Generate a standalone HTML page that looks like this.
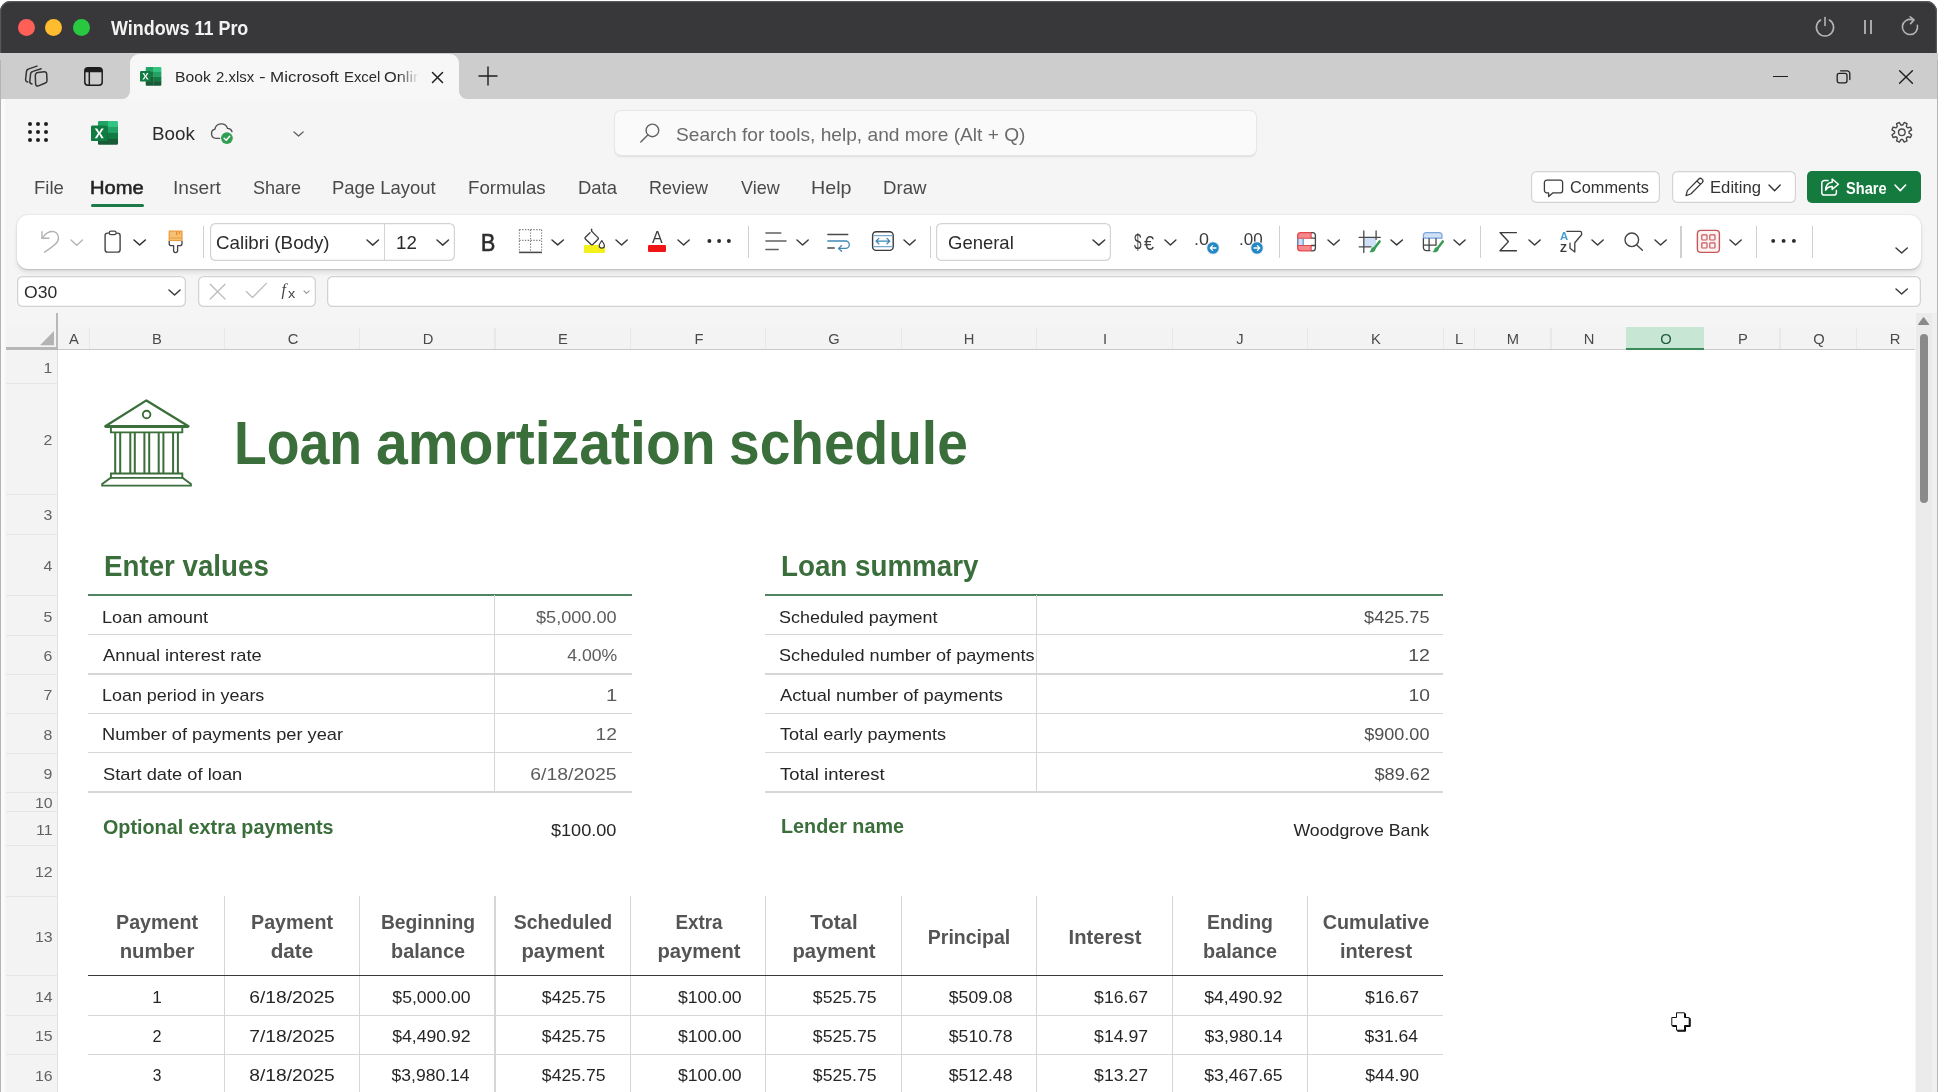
<!DOCTYPE html>
<html lang="en"><head><meta charset="utf-8"><title>Book 2.xlsx - Microsoft Excel Online</title>
<style>
html,body{margin:0;padding:0;}
body{width:1938px;height:1092px;overflow:hidden;position:relative;background:#fff;font-family:"Liberation Sans",sans-serif;}
#root{position:absolute;left:0;top:0;width:1938px;height:1092px;overflow:hidden;will-change:transform;}
#root>div,#root>svg,#root>span{position:absolute;}
.t{white-space:nowrap;display:block;}
svg{overflow:visible;}
</style></head><body><div id="root">
<div style="left:0px;top:1px;width:1937.4px;height:59px;background:#38383a;border-radius:11px 11px 0 0;box-shadow:inset 0 1.2px 0 #5a5a5d,inset 1.2px 0 0 #58585b,inset -1.2px 0 0 #58585b;"></div>
<div style="left:18.0px;top:18.7px;width:17px;height:17px;background:#fe5f57;border-radius:50%;"></div>
<div style="left:45.2px;top:18.7px;width:17px;height:17px;background:#febc2e;border-radius:50%;"></div>
<div style="left:72.5px;top:18.7px;width:17px;height:17px;background:#28c840;border-radius:50%;"></div>
<svg style="left:1812.6px;top:14.7px;" width="24" height="24" viewBox="0 0 24 24"><path d="M7.6 5 A8.6 8.6 0 1 0 16.4 5" fill="none" stroke="#b4b4b6" stroke-width="1.6" stroke-linecap="round"/><path d="M12 2.6 V10.4" stroke="#b4b4b6" stroke-width="1.6" stroke-linecap="round"/></svg>
<div style="left:1864.2px;top:19.5px;width:1.8px;height:14px;background:#a9a9ab;"></div>
<div style="left:1870.4px;top:19.5px;width:1.8px;height:14px;background:#a9a9ab;"></div>
<svg style="left:1898.4px;top:15.2px;" width="24" height="24" viewBox="0 0 24 24"><path d="M14.2 4.7 A7.6 7.6 0 1 0 19.4 10.4" fill="none" stroke="#b4b4b6" stroke-width="1.6" stroke-linecap="round"/><path d="M12.2 1.8 L16 4.9 L12.6 8.6" fill="none" stroke="#b4b4b6" stroke-width="1.6" stroke-linecap="round" stroke-linejoin="round"/></svg>
<div style="left:0px;top:53.4px;width:1938px;height:45.8px;background:#cdcdcd;"></div>
<div style="left:0px;top:99px;width:1938px;height:993px;background:#f5f5f5;"></div>
<div style="left:130px;top:54px;width:329px;height:45px;background:#f7f7f7;border-radius:9px 9px 0 0;"></div>
<svg style="left:122px;top:91px;" width="8" height="8" viewBox="0 0 8 8"><path d="M8 0 V8 H0 A8 8 0 0 0 8 0Z" fill="#f7f7f7"/></svg>
<svg style="left:459px;top:91px;" width="8" height="8" viewBox="0 0 8 8"><path d="M0 0 V8 H8 A8 8 0 0 1 0 0Z" fill="#f7f7f7"/></svg>
<svg style="left:24px;top:64px;" width="24" height="24" viewBox="0 0 24 24"><g fill="none" stroke="#333" stroke-width="1.5" stroke-linecap="round" stroke-linejoin="round"><path d="M13.9 8.6 L20.2 7.8 A2.2 2.2 0 0 1 22.7 10 L23 16.6 A2.4 2.4 0 0 1 21.4 19 L14.4 21.9 A2 2 0 0 1 11.6 20.1 L11.3 11.4 A2.7 2.7 0 0 1 13.9 8.6Z" fill="#cdcdcd"/><path d="M17.1 4.8 L8.9 7.4 A3.2 3.2 0 0 0 6.5 10.6 L5.8 17 A2.6 2.6 0 0 0 8 19.9"/><path d="M13 2.1 L4.8 4.9 A3.2 3.2 0 0 0 2.4 8 L1.7 14.6 A2.6 2.6 0 0 0 3.7 18"/></g></svg>
<svg style="left:84px;top:66.5px;" width="19" height="19" viewBox="0 0 19 19"><rect x="0.8" y="0.8" width="17.4" height="17.4" rx="3.2" fill="none" stroke="#1d1d1d" stroke-width="1.5"/><path d="M0.8 5.2 V4 A3.2 3.2 0 0 1 4 0.8 H15 A3.2 3.2 0 0 1 18.2 4 V5.2Z" fill="#1d1d1d"/><path d="M5.3 5 V18" stroke="#1d1d1d" stroke-width="1.5"/></svg>
<svg style="left:140px;top:67px;" width="21.6" height="18.8" viewBox="0 0 21.6 18.8"><clipPath id="c140"><rect x="5.5" y="0" width="16.1" height="18.8" rx="1.4"/></clipPath><g clip-path="url(#c140)"><rect x="5.5" y="0.00" width="8.25" height="4.90" fill="#21a366"/><rect x="13.55" y="0.00" width="8.05" height="4.90" fill="#33c481"/><rect x="5.5" y="4.70" width="8.25" height="4.90" fill="#107c41"/><rect x="13.55" y="4.70" width="8.05" height="4.90" fill="#21a366"/><rect x="5.5" y="9.40" width="8.25" height="4.90" fill="#185c37"/><rect x="13.55" y="9.40" width="8.05" height="4.90" fill="#107c41"/><rect x="5.5" y="14.10" width="8.25" height="4.90" fill="#185c37"/><rect x="13.55" y="14.10" width="8.05" height="4.90" fill="#185c37"/></g><rect x="0" y="4.1" width="11" height="10.5" rx="1.2" fill="#107c41"/><path d="M2.47 6.09 H4.12 L5.50 8.63 L6.88 6.09 H8.53 L6.33 9.35 L8.53 12.61 H6.88 L5.50 10.07 L4.12 12.61 H2.47 L4.67 9.35Z" fill="#fff"/></svg>
<svg style="left:430px;top:70px;" width="15" height="15" viewBox="0 0 15 15"><path d="M2.5 2.5 L12.5 12.5 M12.5 2.5 L2.5 12.5" stroke="#1f1f1f" stroke-width="1.5" stroke-linecap="round"/></svg>
<svg style="left:478px;top:65.6px;" width="20" height="20" viewBox="0 0 20 20"><path d="M1 10 H19 M10 1 V19" stroke="#1f1f1f" stroke-width="1.4" stroke-linecap="round"/></svg>
<div style="left:1772.5px;top:75.8px;width:15.5px;height:1.3px;background:#1f1f1f;"></div>
<svg style="left:1835.6px;top:69px;" width="16" height="16" viewBox="0 0 16 16"><rect x="1.2" y="4.4" width="9.8" height="9.4" rx="2" fill="none" stroke="#1f1f1f" stroke-width="1.3"/><path d="M4.6 1.8 H11 A2.8 2.8 0 0 1 13.8 4.6 V10.6" fill="none" stroke="#1f1f1f" stroke-width="1.3" stroke-linecap="round"/></svg>
<svg style="left:1898.1px;top:68.6px;" width="16" height="16" viewBox="0 0 16 16"><path d="M1.6 1.8 L14.4 14.2 M14.4 1.8 L1.6 14.2" stroke="#1f1f1f" stroke-width="1.4" stroke-linecap="round"/></svg>
<div style="left:28.0px;top:121.8px;width:4px;height:4px;background:#1f1f1f;border-radius:50%;"></div>
<div style="left:28.0px;top:129.8px;width:4px;height:4px;background:#1f1f1f;border-radius:50%;"></div>
<div style="left:28.0px;top:137.8px;width:4px;height:4px;background:#1f1f1f;border-radius:50%;"></div>
<div style="left:36.2px;top:121.8px;width:4px;height:4px;background:#1f1f1f;border-radius:50%;"></div>
<div style="left:36.2px;top:129.8px;width:4px;height:4px;background:#1f1f1f;border-radius:50%;"></div>
<div style="left:36.2px;top:137.8px;width:4px;height:4px;background:#1f1f1f;border-radius:50%;"></div>
<div style="left:44.4px;top:121.8px;width:4px;height:4px;background:#1f1f1f;border-radius:50%;"></div>
<div style="left:44.4px;top:129.8px;width:4px;height:4px;background:#1f1f1f;border-radius:50%;"></div>
<div style="left:44.4px;top:137.8px;width:4px;height:4px;background:#1f1f1f;border-radius:50%;"></div>
<svg style="left:91px;top:120.6px;" width="27.0" height="23.8" viewBox="0 0 27.0 23.8"><clipPath id="c91"><rect x="6.9" y="0" width="20.1" height="23.8" rx="1.4"/></clipPath><g clip-path="url(#c91)"><rect x="6.9" y="0.00" width="10.25" height="6.15" fill="#21a366"/><rect x="16.95" y="0.00" width="10.05" height="6.15" fill="#33c481"/><rect x="6.9" y="5.95" width="10.25" height="6.15" fill="#107c41"/><rect x="16.95" y="5.95" width="10.05" height="6.15" fill="#21a366"/><rect x="6.9" y="11.90" width="10.25" height="6.15" fill="#185c37"/><rect x="16.95" y="11.90" width="10.05" height="6.15" fill="#107c41"/><rect x="6.9" y="17.85" width="10.25" height="6.15" fill="#185c37"/><rect x="16.95" y="17.85" width="10.05" height="6.15" fill="#185c37"/></g><rect x="0" y="4.5" width="16.5" height="15.6" rx="1.2" fill="#107c41"/><path d="M3.71 7.46 H6.19 L8.25 11.24 L10.31 7.46 H12.79 L9.49 12.30 L12.79 17.14 H10.31 L8.25 13.36 L6.19 17.14 H3.71 L7.01 12.30Z" fill="#fff"/></svg>
<svg style="left:208px;top:120px;" width="28" height="28" viewBox="208 120 28 28"><path d="M219.6 138.4 H216 A4.7 4.7 0 0 1 214.9 129.2 A6.5 6.5 0 0 1 227.5 128.4 A4.6 4.6 0 0 1 232 131.6" fill="none" stroke="#505050" stroke-width="1.4" stroke-linecap="round"/><circle cx="226.9" cy="138.1" r="5.9" fill="#2f9e50"/><path d="M224.2 138.3 L226.2 140.2 L229.7 136.3" fill="none" stroke="#fff" stroke-width="1.5" stroke-linecap="round" stroke-linejoin="round"/></svg>
<svg style="left:291.65px;top:130.01px;" width="13.1" height="7.97" viewBox="0 0 13.1 7.97"><path d="M2 2 L6.55 5.97 L11.10 2" fill="none" stroke="#616161" stroke-width="1.3" stroke-linecap="round" stroke-linejoin="round"/></svg>
<div style="left:614.5px;top:110.5px;width:641px;height:44px;background:#fafafa;border-radius:6px;box-shadow:0 0 0 1px #e6e6e6,0 1.5px 2px rgba(0,0,0,.10);"></div>
<svg style="left:639px;top:122px;" width="22" height="22" viewBox="0 0 22 22"><circle cx="13.4" cy="8.4" r="6.3" fill="none" stroke="#616161" stroke-width="1.4"/><path d="M8.8 13 L1.8 20" stroke="#616161" stroke-width="1.4" stroke-linecap="round"/></svg>
<svg style="left:1888px;top:118px;" width="28" height="28" viewBox="1888 118 28 28"><g fill="none" stroke="#484848" stroke-width="1.4" stroke-linejoin="round"><circle cx="1901.8" cy="132.3" r="3.3"/><path d="M1909.05 133.19 L1911.60 134.73 L1910.45 137.52 L1907.55 136.79 L1906.29 138.05 L1907.02 140.95 L1904.23 142.10 L1902.69 139.55 L1900.91 139.55 L1899.37 142.10 L1896.58 140.95 L1897.31 138.05 L1896.05 136.79 L1893.15 137.52 L1892.00 134.73 L1894.55 133.19 L1894.55 131.41 L1892.00 129.87 L1893.15 127.08 L1896.05 127.81 L1897.31 126.55 L1896.58 123.65 L1899.37 122.50 L1900.91 125.05 L1902.69 125.05 L1904.23 122.50 L1907.02 123.65 L1906.29 126.55 L1907.55 127.81 L1910.45 127.08 L1911.60 129.87 L1909.05 131.41Z"/></g></svg>
<div style="left:91px;top:203.6px;width:52.5px;height:3px;background:#1b7a47;border-radius:1.5px;"></div>
<div style="left:1530.6px;top:171.2px;width:129.4px;height:31.8px;background:#fff;border-radius:5.5px;box-shadow:inset 0 0 0 1.2px #d4d4d4;"></div>
<svg style="left:1542.8px;top:177.5px;" width="22" height="22" viewBox="0 0 22 22"><path d="M3.6 2.2 H17.4 A2.2 2.2 0 0 1 19.6 4.4 V12.6 A2.2 2.2 0 0 1 17.4 14.8 H10 L5.6 18.6 V14.8 H3.6 A2.2 2.2 0 0 1 1.4 12.6 V4.4 A2.2 2.2 0 0 1 3.6 2.2Z" fill="none" stroke="#3b3b3b" stroke-width="1.3" stroke-linejoin="round"/></svg>
<div style="left:1671.8px;top:171.2px;width:124px;height:31.8px;background:#fff;border-radius:5.5px;box-shadow:inset 0 0 0 1.2px #d4d4d4;"></div>
<svg style="left:1684px;top:177px;" width="21" height="21" viewBox="0 0 21 21"><path d="M14.6 2.2 A2.3 2.3 0 0 1 18.2 5.6 L6.8 17 L2 18.6 L3.4 13.6Z M13 4 L16.4 7.4" fill="none" stroke="#3b3b3b" stroke-width="1.3" stroke-linejoin="round" stroke-linecap="round"/></svg>
<svg style="left:1767.4px;top:182.82px;" width="15.2" height="9.76" viewBox="0 0 15.2 9.76"><path d="M2 2 L7.60 7.76 L13.20 2" fill="none" stroke="#333" stroke-width="1.4" stroke-linecap="round" stroke-linejoin="round"/></svg>
<div style="left:1807px;top:170.8px;width:114px;height:32.5px;background:#147a3d;border-radius:5px;"></div>
<svg style="left:1819.5px;top:177px;" width="20" height="20" viewBox="0 0 20 20"><path d="M8 3.4 H4.4 A2.6 2.6 0 0 0 1.8 6 V15.4 A2.6 2.6 0 0 0 4.4 18 H13.8 A2.6 2.6 0 0 0 16.4 15.4 V13.6" fill="none" stroke="#fff" stroke-width="1.5" stroke-linecap="round"/><path d="M12.2 2 L18.4 7.2 L12.2 12.4 V9.4 C9 9.4 7 10.6 5.6 13.2 C5.8 8.6 8.2 5.4 12.2 5.2Z" fill="none" stroke="#fff" stroke-width="1.5" stroke-linejoin="round"/></svg>
<svg style="left:1893.0px;top:182.88px;" width="14.6" height="9.64" viewBox="0 0 14.6 9.64"><path d="M2 2 L7.30 7.64 L12.60 2" fill="none" stroke="#fff" stroke-width="1.6" stroke-linecap="round" stroke-linejoin="round"/></svg>
<div style="left:16.8px;top:215.3px;width:1904.4px;height:53.6px;background:#fff;border-radius:11px;box-shadow:0 0.8px 1.8px rgba(0,0,0,.17),0 4px 5px rgba(0,0,0,.085);"></div>
<div style="left:202.9px;top:225.6px;width:1.2px;height:32.4px;background:#d0d0d0;"></div>
<div style="left:747.6999999999999px;top:225.6px;width:1.2px;height:32.4px;background:#d0d0d0;"></div>
<div style="left:929.6px;top:225.6px;width:1.2px;height:32.4px;background:#d0d0d0;"></div>
<div style="left:1278.6000000000001px;top:225.6px;width:1.2px;height:32.4px;background:#d0d0d0;"></div>
<div style="left:1479.8000000000002px;top:225.6px;width:1.2px;height:32.4px;background:#d0d0d0;"></div>
<div style="left:1680.4px;top:225.6px;width:1.2px;height:32.4px;background:#d0d0d0;"></div>
<div style="left:1755.9px;top:225.6px;width:1.2px;height:32.4px;background:#d0d0d0;"></div>
<div style="left:1812.0px;top:225.6px;width:1.2px;height:32.4px;background:#d0d0d0;"></div>
<svg style="left:38px;top:228px;" width="24" height="26" viewBox="0 0 24 26"><path d="M4 3.8 V10.2 H11" fill="none" stroke="#b2b2b2" stroke-width="1.4" stroke-linecap="round" stroke-linejoin="round"/><path d="M4.4 10 C7 5.4 12 2.6 16 3.7 C20.2 5 21.6 9.6 19.6 13.4 C18 16.6 12 20.6 6.6 24.2" fill="none" stroke="#b2b2b2" stroke-width="1.4" stroke-linecap="round" stroke-linejoin="round"/></svg>
<svg style="left:68.75px;top:237.81px;" width="15.5" height="9.17" viewBox="0 0 15.5 9.17"><path d="M2 2 L7.75 7.17 L13.50 2" fill="none" stroke="#b2b2b2" stroke-width="1.3" stroke-linecap="round" stroke-linejoin="round"/></svg>
<svg style="left:103px;top:229px;" width="20" height="26" viewBox="0 0 20 26"><rect x="2.1" y="4.1" width="15" height="19" rx="2.4" fill="none" stroke="#444" stroke-width="1.4"/><rect x="6.2" y="2.2" width="6.9" height="3.4" rx="1.7" fill="#fff" stroke="#444" stroke-width="1.2"/></svg>
<svg style="left:131.75px;top:237.93px;" width="15.3" height="8.95" viewBox="0 0 15.3 8.95"><path d="M2 2 L7.65 6.95 L13.30 2" fill="none" stroke="#2b2b2b" stroke-width="1.5" stroke-linecap="round" stroke-linejoin="round"/></svg>
<svg style="left:166px;top:229px;" width="20" height="26" viewBox="0 0 20 26"><path d="M3.2 2.2 H16 V11.6 H3.2Z" fill="#f6c172" stroke="#ea9a3e" stroke-width="1.2" stroke-linejoin="round"/><path d="M3.2 9 H16" stroke="#ea9a3e" stroke-width="1"/><path d="M10.6 2.4 V6.2 M13.4 2.4 V5.2" stroke="#e58a2a" stroke-width="1.2"/><path d="M3.2 12 V14.4 A2.2 2.2 0 0 0 5.4 16.6 H7.6 V21.6 A2 2 0 0 0 11.6 21.6 V16.6 H13.8 A2.2 2.2 0 0 0 16 14.4 V12" fill="#fff" stroke="#444" stroke-width="1.3" stroke-linejoin="round"/></svg>
<div style="left:209.5px;top:222.9px;width:245.3px;height:37.8px;background:#fff;border-radius:5.5px;box-shadow:inset 0 0 0 1.2px #d3d3d3;"></div>
<div style="left:383.9px;top:224px;width:1.2px;height:35.6px;background:#d3d3d3;"></div>
<svg style="left:365.35px;top:238.03px;" width="15.5" height="9.15" viewBox="0 0 15.5 9.15"><path d="M2 2 L7.75 7.15 L13.50 2" fill="none" stroke="#3a3a3a" stroke-width="1.5" stroke-linecap="round" stroke-linejoin="round"/></svg>
<svg style="left:434.85px;top:238.03px;" width="15.5" height="9.15" viewBox="0 0 15.5 9.15"><path d="M2 2 L7.75 7.15 L13.50 2" fill="none" stroke="#3a3a3a" stroke-width="1.5" stroke-linecap="round" stroke-linejoin="round"/></svg>
<svg style="left:518px;top:228px;" width="26" height="26" viewBox="0 0 26 26"><path d="M1.4 1.6 H23.6 M1.4 12.4 H23.6 M1.4 1.6 V23.6 M12.5 1.6 V23.6 M23.6 1.6 V23.6" fill="none" stroke="#7a7a7a" stroke-width="1.1" stroke-dasharray="1.3 1.5"/><path d="M1 24.4 H24" stroke="#4a4a4a" stroke-width="1.6"/></svg>
<svg style="left:550.3px;top:237.72px;" width="15.4" height="8.95" viewBox="0 0 15.4 8.95"><path d="M2 2 L7.70 6.95 L13.40 2" fill="none" stroke="#3a3a3a" stroke-width="1.5" stroke-linecap="round" stroke-linejoin="round"/></svg>
<div style="left:583.5px;top:245.3px;width:21.2px;height:7.3px;background:#f3f01c;border-radius:1px;"></div>
<svg style="left:583px;top:228px;" width="24" height="22" viewBox="0 0 24 22"><path d="M8.6 1.2 V6.2" stroke="#3b3b3b" stroke-width="1.3" stroke-linecap="round"/><path d="M8.8 3.4 L15 9.6 A1.2 1.2 0 0 1 15 11.3 L10 16.3 A1.6 1.6 0 0 1 7.8 16.3 L2.4 11 A1.2 1.2 0 0 1 2.4 9.3 L7 4.8" fill="#fff" stroke="#3b3b3b" stroke-width="1.3" stroke-linejoin="round" stroke-linecap="round"/><path d="M18.8 12.6 C20.2 14.6 21.4 16.2 21.4 17.6 A2.6 2.6 0 0 1 16.2 17.6 C16.2 16.2 17.4 14.6 18.8 12.6Z" fill="#fff" stroke="#3b3b3b" stroke-width="1.2" stroke-linejoin="round"/></svg>
<svg style="left:613.6px;top:237.72px;" width="15.2" height="8.95" viewBox="0 0 15.2 8.95"><path d="M2 2 L7.60 6.95 L13.20 2" fill="none" stroke="#3a3a3a" stroke-width="1.5" stroke-linecap="round" stroke-linejoin="round"/></svg>
<div style="left:647.9px;top:245.1px;width:18.4px;height:7.3px;background:#f01414;border-radius:1.2px;"></div>
<svg style="left:676.2px;top:237.72px;" width="15.2" height="8.95" viewBox="0 0 15.2 8.95"><path d="M2 2 L7.60 6.95 L13.20 2" fill="none" stroke="#3a3a3a" stroke-width="1.5" stroke-linecap="round" stroke-linejoin="round"/></svg>
<svg style="left:700px;top:236px;" width="40" height="10" viewBox="0 0 40 10"><circle cx="9.4" cy="5" r="1.95" fill="#2b2b2b"/><circle cx="19.1" cy="5" r="1.95" fill="#2b2b2b"/><circle cx="28.9" cy="5" r="1.95" fill="#2b2b2b"/></svg>
<svg style="left:760px;top:228px;" width="32" height="26" viewBox="0 0 32 26"><path d="M5.9 5 H20.8 M5.9 12.9 H26 M5.9 21.4 H18.2" stroke="#616161" stroke-width="1.5" stroke-linecap="round"/></svg>
<svg style="left:795.2px;top:237.72px;" width="15.2" height="8.95" viewBox="0 0 15.2 8.95"><path d="M2 2 L7.60 6.95 L13.20 2" fill="none" stroke="#3a3a3a" stroke-width="1.5" stroke-linecap="round" stroke-linejoin="round"/></svg>
<svg style="left:826px;top:230px;" width="26" height="24" viewBox="0 0 26 24"><path d="M1.8 4.5 H21.8" stroke="#4a4a4a" stroke-width="1.3" stroke-linecap="round"/><path d="M1.8 18 H8.2" stroke="#4a4a4a" stroke-width="1.5" stroke-linecap="round"/><path d="M1.8 11 H19.6 A3.6 3.6 0 0 1 19.6 18.4 H13.2" fill="none" stroke="#4089b5" stroke-width="1.3" stroke-linecap="round"/><path d="M15.6 15.6 L12.6 18.4 L15.6 21.2" fill="none" stroke="#4089b5" stroke-width="1.3" stroke-linecap="round" stroke-linejoin="round"/></svg>
<svg style="left:871px;top:230px;" width="24" height="22" viewBox="0 0 24 22"><rect x="1.6" y="1.8" width="20.6" height="18.6" rx="3.6" fill="#fff" stroke="#3b3b3b" stroke-width="1.4"/><path d="M1.8 5.6 H22 M1.8 16.6 H22" stroke="#7aa9cf" stroke-width="1.2"/><path d="M5.2 11.1 H18.6 M7.8 8.4 L5 11.1 L7.8 13.8 M16 8.4 L18.8 11.1 L16 13.8" fill="none" stroke="#3d86b4" stroke-width="1.3" stroke-linecap="round" stroke-linejoin="round"/></svg>
<svg style="left:902.1px;top:237.72px;" width="15.2" height="8.95" viewBox="0 0 15.2 8.95"><path d="M2 2 L7.60 6.95 L13.20 2" fill="none" stroke="#3a3a3a" stroke-width="1.5" stroke-linecap="round" stroke-linejoin="round"/></svg>
<div style="left:935.7px;top:222.9px;width:175.4px;height:37.8px;background:#fff;border-radius:5.5px;box-shadow:inset 0 0 0 1.2px #d3d3d3;"></div>
<svg style="left:1091.45px;top:238.03px;" width="15.7" height="9.15" viewBox="0 0 15.7 9.15"><path d="M2 2 L7.85 7.15 L13.70 2" fill="none" stroke="#3a3a3a" stroke-width="1.5" stroke-linecap="round" stroke-linejoin="round"/></svg>
<svg style="left:1163.35px;top:237.72px;" width="14.9" height="8.95" viewBox="0 0 14.9 8.95"><path d="M2 2 L7.45 6.95 L12.90 2" fill="none" stroke="#3a3a3a" stroke-width="1.5" stroke-linecap="round" stroke-linejoin="round"/></svg>
<svg style="left:1294px;top:229px;" width="26" height="26" viewBox="1294 229 26 26"><path d="M1311.1 232.7 H1300.6 A2.9 2.9 0 0 0 1297.7 235.6 V238.2 H1311.1Z" fill="#f5898c"/><path d="M1311.1 250.8 H1300.6 A2.9 2.9 0 0 1 1297.7 247.9 V245.5 H1311.1Z" fill="#f5898c"/><rect x="1297.7" y="238.2" width="5.4" height="7.3" fill="#cfe0f5"/><path d="M1311.1 232.7 H1300.6 A2.9 2.9 0 0 0 1297.7 235.6 V247.9 A2.9 2.9 0 0 0 1300.6 250.8 H1311.1" fill="none" stroke="#e2474c" stroke-width="1.3"/><path d="M1297.7 238.2 H1311.1 M1297.7 245.5 H1311.1 M1311.1 232.7 V238.2 M1311.1 245.5 V250.8" stroke="#e2474c" stroke-width="1.1"/><path d="M1297.7 238.4 V245.3 M1303.2 238.4 V245.3" stroke="#4f8fce" stroke-width="1.1"/><path d="M1311.1 232.7 H1312.5 A2.9 2.9 0 0 1 1315.4 235.6 V247.9 A2.9 2.9 0 0 1 1312.5 250.8 H1311.1 M1311.1 238.2 H1315.4 M1311.1 245.5 H1315.4" fill="none" stroke="#444" stroke-width="1.3"/></svg>
<svg style="left:1325.95px;top:237.72px;" width="15.3" height="8.95" viewBox="0 0 15.3 8.95"><path d="M2 2 L7.65 6.95 L13.30 2" fill="none" stroke="#3a3a3a" stroke-width="1.5" stroke-linecap="round" stroke-linejoin="round"/></svg>
<svg style="left:1356px;top:228px;" width="28" height="28" viewBox="1356 228 28 28"><rect x="1363.8" y="237.4" width="12.3" height="9.4" fill="#cfe0f7"/><path d="M1363.8 231 V252.6 M1376.1 231 V239.4 M1359.2 237.4 H1380.2 M1359.2 246.8 H1371" stroke="#4a4a4a" stroke-width="1.3" stroke-linecap="round"/><path d="M1379.6 241.4 L1374.6 248" stroke="#3a9c57" stroke-width="2.5" stroke-linecap="round"/><path d="M1374.9 247 C1373.2 246.6 1371.6 247.4 1371.2 249 C1370.9 250.6 1370.2 251.4 1369.2 251.9 C1371.4 252.8 1374.2 252.2 1375.2 250.2 C1375.8 249 1375.8 247.8 1374.9 247Z" fill="#3a9c57"/></svg>
<svg style="left:1389.1px;top:237.72px;" width="15.4" height="8.95" viewBox="0 0 15.4 8.95"><path d="M2 2 L7.70 6.95 L13.40 2" fill="none" stroke="#3a3a3a" stroke-width="1.5" stroke-linecap="round" stroke-linejoin="round"/></svg>
<svg style="left:1420px;top:228px;" width="28" height="28" viewBox="1420 228 28 28"><path d="M1423.4 238.2 V235.6 A3 3 0 0 1 1426.4 232.6 H1439 A3 3 0 0 1 1442 235.6 V238.2Z" fill="#cfe0f7" stroke="#7ba3d8" stroke-width="1.2"/><path d="M1423.4 238.6 V247.6 A3 3 0 0 0 1426.4 250.6 H1430 M1429.1 238.6 V250.6 M1423.4 245.2 H1436.1 M1436 238.6 V245.2" fill="none" stroke="#444" stroke-width="1.3" stroke-linecap="round"/><path d="M1442.8 241.4 L1437.8 248" stroke="#3a9c57" stroke-width="2.5" stroke-linecap="round"/><path d="M1438.1 247 C1436.4 246.6 1434.8 247.4 1434.4 249 C1434.1 250.6 1433.4 251.4 1432.4 251.9 C1434.6 252.8 1437.4 252.2 1438.4 250.2 C1439 249 1439 247.8 1438.1 247Z" fill="#3a9c57"/></svg>
<svg style="left:1452.05px;top:237.72px;" width="15.1" height="8.95" viewBox="0 0 15.1 8.95"><path d="M2 2 L7.55 6.95 L13.10 2" fill="none" stroke="#3a3a3a" stroke-width="1.5" stroke-linecap="round" stroke-linejoin="round"/></svg>
<svg style="left:1498px;top:231px;" width="21" height="22" viewBox="0 0 21 22"><path d="M18.4 1.6 H2 L10.4 10.6 L2 19.8 H18.4" fill="none" stroke="#3b3b3b" stroke-width="1.4" stroke-linejoin="round" stroke-linecap="round"/></svg>
<svg style="left:1527.4px;top:237.72px;" width="15.2" height="8.95" viewBox="0 0 15.2 8.95"><path d="M2 2 L7.60 6.95 L13.20 2" fill="none" stroke="#3a3a3a" stroke-width="1.5" stroke-linecap="round" stroke-linejoin="round"/></svg>
<svg style="left:1556px;top:228px;" width="30" height="28" viewBox="1556 228 30 28"><path d="M1566.8 231.3 H1580 A1.6 1.6 0 0 1 1581.6 232.9 V234.7 L1574.8 242.8 V252 L1570 248.3 V243.2" fill="none" stroke="#444" stroke-width="1.35" stroke-linejoin="round" stroke-linecap="round"/></svg>
<svg style="left:1590.1px;top:237.72px;" width="15.2" height="8.95" viewBox="0 0 15.2 8.95"><path d="M2 2 L7.60 6.95 L13.20 2" fill="none" stroke="#3a3a3a" stroke-width="1.5" stroke-linecap="round" stroke-linejoin="round"/></svg>
<svg style="left:1620px;top:228px;" width="28" height="28" viewBox="1620 228 28 28"><circle cx="1631.8" cy="239.8" r="6.8" fill="none" stroke="#444" stroke-width="1.4"/><path d="M1636.8 244.9 L1642.4 250.3" stroke="#444" stroke-width="1.4" stroke-linecap="round"/></svg>
<svg style="left:1653.2px;top:237.72px;" width="15.2" height="8.95" viewBox="0 0 15.2 8.95"><path d="M2 2 L7.60 6.95 L13.20 2" fill="none" stroke="#3a3a3a" stroke-width="1.5" stroke-linecap="round" stroke-linejoin="round"/></svg>
<svg style="left:1696px;top:229px;" width="26" height="26" viewBox="0 0 26 26"><rect x="1.4" y="1.4" width="22" height="22" rx="3.4" fill="#fdf3f3" stroke="#c8575a" stroke-width="1.4"/><g fill="none" stroke="#c8575a" stroke-width="1.2"><rect x="5.8" y="5.8" width="5.2" height="5.2" rx=".8"/><rect x="13.8" y="5.8" width="5.2" height="5.2" rx=".8"/><rect x="5.8" y="13.8" width="5.2" height="5.2" rx=".8"/><rect x="13.8" y="13.8" width="5.2" height="5.2" rx=".8"/></g></svg>
<svg style="left:1728.3px;top:237.72px;" width="15.2" height="8.95" viewBox="0 0 15.2 8.95"><path d="M2 2 L7.60 6.95 L13.20 2" fill="none" stroke="#3a3a3a" stroke-width="1.5" stroke-linecap="round" stroke-linejoin="round"/></svg>
<svg style="left:1765px;top:236px;" width="40" height="10" viewBox="0 0 40 10"><circle cx="8.2" cy="4.9" r="1.95" fill="#2b2b2b"/><circle cx="18.6" cy="4.9" r="1.95" fill="#2b2b2b"/><circle cx="28.9" cy="4.9" r="1.95" fill="#2b2b2b"/></svg>
<svg style="left:1893.75px;top:246.33px;" width="15.3" height="8.95" viewBox="0 0 15.3 8.95"><path d="M2 2 L7.65 6.95 L13.30 2" fill="none" stroke="#3a3a3a" stroke-width="1.5" stroke-linecap="round" stroke-linejoin="round"/></svg>
<div style="left:16.8px;top:275.5px;width:169.1px;height:31.2px;background:#fff;border-radius:5.5px;box-shadow:inset 0 0 0 1.25px #d2d2d2;"></div>
<svg style="left:167.05px;top:288.32px;" width="15.1" height="8.95" viewBox="0 0 15.1 8.95"><path d="M2 2 L7.55 6.95 L13.10 2" fill="none" stroke="#3a3a3a" stroke-width="1.5" stroke-linecap="round" stroke-linejoin="round"/></svg>
<div style="left:197.7px;top:275.5px;width:118.2px;height:31.2px;background:#fff;border-radius:5.5px;box-shadow:inset 0 0 0 1.25px #d2d2d2;"></div>
<svg style="left:209.2px;top:282.6px;" width="17.2" height="17.2" viewBox="0 0 17.2 17.2"><path d="M1.2 1.2 L16 16 M16 1.2 L1.2 16" stroke="#bcbcbc" stroke-width="1.3" stroke-linecap="round"/></svg>
<svg style="left:245px;top:282.4px;" width="23" height="17" viewBox="0 0 23 17"><path d="M1.3 9.6 L7.6 15.4 L21.4 1.4" fill="none" stroke="#bcbcbc" stroke-width="1.3" stroke-linecap="round" stroke-linejoin="round"/></svg>
<svg style="left:302.45px;top:288.5px;" width="9.1" height="6.39" viewBox="0 0 9.1 6.39"><path d="M2 2 L4.55 4.39 L7.10 2" fill="none" stroke="#9a9a9a" stroke-width="1.1" stroke-linecap="round" stroke-linejoin="round"/></svg>
<div style="left:327.3px;top:275.5px;width:1593.8px;height:31.2px;background:#fff;border-radius:5.5px;box-shadow:inset 0 0 0 1.25px #d2d2d2;"></div>
<svg style="left:1893.75px;top:287.32px;" width="15.3" height="8.95" viewBox="0 0 15.3 8.95"><path d="M2 2 L7.65 6.95 L13.30 2" fill="none" stroke="#3a3a3a" stroke-width="1.5" stroke-linecap="round" stroke-linejoin="round"/></svg>
<div style="left:58px;top:349.5px;width:1857px;height:743px;background:#fff;"></div>
<div style="left:0px;top:60px;width:1.2px;height:1040px;background:#b4b4b4;"></div>
<div style="left:1.2px;top:99px;width:4.3px;height:994px;background:#fafafa;"></div>
<div style="left:6px;top:327px;width:51.5px;height:766px;background:#f3f3f3;"></div>
<div style="left:58px;top:327px;width:1857px;height:22.5px;background:#f3f3f3;"></div>
<div style="left:56.3px;top:313px;width:2.2px;height:36.5px;background:#b9b9b9;"></div>
<div style="left:57.4px;top:349.5px;width:1px;height:744px;background:#e2e2e2;"></div>
<div style="left:58px;top:349px;width:1857px;height:1.2px;background:#c9c9c9;"></div>
<div style="left:5.8px;top:347.4px;width:52.7px;height:2.5px;background:#b7b7b7;"></div>
<svg style="left:40px;top:330.8px;" width="14" height="14.2" viewBox="0 0 14 14.2"><path d="M14 0 V14.2 H0Z" fill="#b3b3b3"/></svg>
<div style="left:1626px;top:327px;width:78.4px;height:21px;background:#c8e6d4;"></div>
<div style="left:1626px;top:347.6px;width:78.4px;height:2.4px;background:#3a8a5c;"></div>
<div style="left:88.60000000000001px;top:328px;width:1.2px;height:21px;background:#e8e8e8;"></div>
<div style="left:223.8px;top:328px;width:1.2px;height:21px;background:#e8e8e8;"></div>
<div style="left:359.0px;top:328px;width:1.2px;height:21px;background:#e8e8e8;"></div>
<div style="left:494.4px;top:328px;width:1.2px;height:21px;background:#e8e8e8;"></div>
<div style="left:629.9px;top:328px;width:1.2px;height:21px;background:#e8e8e8;"></div>
<div style="left:765.1999999999999px;top:328px;width:1.2px;height:21px;background:#e8e8e8;"></div>
<div style="left:900.6px;top:328px;width:1.2px;height:21px;background:#e8e8e8;"></div>
<div style="left:1036.0px;top:328px;width:1.2px;height:21px;background:#e8e8e8;"></div>
<div style="left:1171.6000000000001px;top:328px;width:1.2px;height:21px;background:#e8e8e8;"></div>
<div style="left:1307.0px;top:328px;width:1.2px;height:21px;background:#e8e8e8;"></div>
<div style="left:1442.7px;top:328px;width:1.2px;height:21px;background:#e8e8e8;"></div>
<div style="left:1473.8000000000002px;top:328px;width:1.2px;height:21px;background:#e8e8e8;"></div>
<div style="left:1550.4px;top:328px;width:1.2px;height:21px;background:#e8e8e8;"></div>
<div style="left:1779.4px;top:328px;width:1.2px;height:21px;background:#e8e8e8;"></div>
<div style="left:1856.0px;top:328px;width:1.2px;height:21px;background:#e8e8e8;"></div>
<div style="left:6px;top:383.3px;width:51px;height:1px;background:#e6e6e6;"></div>
<div style="left:6px;top:493.7px;width:51px;height:1px;background:#e6e6e6;"></div>
<div style="left:6px;top:533.5px;width:51px;height:1px;background:#e6e6e6;"></div>
<div style="left:6px;top:595.1px;width:51px;height:1px;background:#e6e6e6;"></div>
<div style="left:6px;top:634.5px;width:51px;height:1px;background:#e6e6e6;"></div>
<div style="left:6px;top:673.9px;width:51px;height:1px;background:#e6e6e6;"></div>
<div style="left:6px;top:713.3px;width:51px;height:1px;background:#e6e6e6;"></div>
<div style="left:6px;top:752.7px;width:51px;height:1px;background:#e6e6e6;"></div>
<div style="left:6px;top:791.9px;width:51px;height:1px;background:#e6e6e6;"></div>
<div style="left:6px;top:810.9px;width:51px;height:1px;background:#e6e6e6;"></div>
<div style="left:6px;top:844.7px;width:51px;height:1px;background:#e6e6e6;"></div>
<div style="left:6px;top:895.9px;width:51px;height:1px;background:#e6e6e6;"></div>
<div style="left:6px;top:974.9px;width:51px;height:1px;background:#e6e6e6;"></div>
<div style="left:6px;top:1014.9px;width:51px;height:1px;background:#e6e6e6;"></div>
<div style="left:6px;top:1054.1px;width:51px;height:1px;background:#e6e6e6;"></div>
<div style="left:6px;top:1093.5px;width:51px;height:1px;background:#e6e6e6;"></div>
<div style="left:1915.8px;top:312.8px;width:16.4px;height:781px;background:#ebebeb;"></div>
<div style="left:1932.2px;top:312.8px;width:4.7px;height:781px;background:#f0f0f0;"></div>
<div style="left:1936.9px;top:60px;width:1.1px;height:1040px;background:#b6b6b6;"></div>
<svg style="left:1918.3px;top:317px;" width="11.2" height="8.4" viewBox="0 0 11.2 8.4"><path d="M5.6 1 L10.4 7.4 H0.8Z" fill="#8a8a8a" stroke="#8a8a8a" stroke-width="1.4" stroke-linejoin="round"/></svg>
<div style="left:1920px;top:333.6px;width:8.1px;height:169.8px;background:#8a8a8a;border-radius:4.05px;"></div>
<svg style="left:98px;top:396px;" width="98" height="94" viewBox="98 396 98 94"><g fill="none" stroke="#3a6e3b" stroke-linejoin="round" stroke-linecap="butt"><path d="M146.4 400.4 L105.3 426.3 H188.5 Z" stroke-width="2.3"/><path d="M105.3 426.4 H188.5" stroke-width="3"/><circle cx="146.6" cy="414.5" r="3.8" stroke-width="1.9"/><path d="M110.9 427.5 V432.4 H182.3 V427.5" stroke-width="1.9" stroke-linejoin="miter"/><path d="M110.9 478.4 V473.5 H182.3 V478.4" stroke-width="1.9" stroke-linejoin="miter"/><path d="M103 478.1 H190.2" stroke-width="0"/><path d="M110.4 477.9 H182.8 L190.9 483.9 V485.6 H102.2 V483.9 Z" stroke-width="1.9" stroke-linejoin="miter"/><path d="M115.2 432.6 V473.4 M120.2 432.6 V473.4" stroke-width="2"/><path d="M130.3 432.6 V473.4 M134.8 432.6 V473.4" stroke-width="2"/><path d="M144.4 432.6 V473.4 M149.2 432.6 V473.4" stroke-width="2"/><path d="M158.7 432.6 V473.4 M163.4 432.6 V473.4" stroke-width="2"/><path d="M173.1 432.6 V473.4 M177.9 432.6 V473.4" stroke-width="2"/></g></svg>
<div style="left:88px;top:594.2px;width:543.6px;height:1.4px;background:#4f8560;"></div>
<div style="left:765px;top:594.2px;width:678.4px;height:1.4px;background:#4f8560;"></div>
<div style="left:88px;top:634.0px;width:543.6px;height:1.4px;background:#d6d6d6;"></div>
<div style="left:765px;top:634.0px;width:678.4px;height:1.4px;background:#d6d6d6;"></div>
<div style="left:88px;top:673.2px;width:543.6px;height:1.4px;background:#d6d6d6;"></div>
<div style="left:765px;top:673.2px;width:678.4px;height:1.4px;background:#d6d6d6;"></div>
<div style="left:88px;top:712.7px;width:543.6px;height:1.4px;background:#d6d6d6;"></div>
<div style="left:765px;top:712.7px;width:678.4px;height:1.4px;background:#d6d6d6;"></div>
<div style="left:88px;top:751.8px;width:543.6px;height:1.4px;background:#d6d6d6;"></div>
<div style="left:765px;top:751.8px;width:678.4px;height:1.4px;background:#d6d6d6;"></div>
<div style="left:88px;top:791.3px;width:543.6px;height:1.4px;background:#d6d6d6;"></div>
<div style="left:765px;top:791.3px;width:678.4px;height:1.4px;background:#d6d6d6;"></div>
<div style="left:494px;top:595.4px;width:1.3px;height:196.8px;background:#d6d6d6;"></div>
<div style="left:1036px;top:595.4px;width:1.3px;height:196.8px;background:#d6d6d6;"></div>
<div style="left:223.8px;top:896.4px;width:1.2px;height:197px;background:#d6d6d6;"></div>
<div style="left:359.0px;top:896.4px;width:1.2px;height:197px;background:#d6d6d6;"></div>
<div style="left:494.4px;top:896.4px;width:1.2px;height:197px;background:#d6d6d6;"></div>
<div style="left:629.9px;top:896.4px;width:1.2px;height:197px;background:#d6d6d6;"></div>
<div style="left:765.1999999999999px;top:896.4px;width:1.2px;height:197px;background:#d6d6d6;"></div>
<div style="left:900.6px;top:896.4px;width:1.2px;height:197px;background:#d6d6d6;"></div>
<div style="left:1036.0px;top:896.4px;width:1.2px;height:197px;background:#d6d6d6;"></div>
<div style="left:1171.6000000000001px;top:896.4px;width:1.2px;height:197px;background:#d6d6d6;"></div>
<div style="left:1307.0px;top:896.4px;width:1.2px;height:197px;background:#d6d6d6;"></div>
<div style="left:88px;top:974.8px;width:1355.4px;height:1.4px;background:#3a3a3a;"></div>
<div style="left:88px;top:1014.9px;width:1355.4px;height:1.3px;background:#d6d6d6;"></div>
<div style="left:88px;top:1053.8px;width:1355.4px;height:1.3px;background:#d6d6d6;"></div>
<svg style="left:1664px;top:1005px;" width="34" height="34" viewBox="1664 1005 34 34"><path d="M1677.5 1013.8 H1685.5 V1018.5 H1690.2 V1026.5 H1685.5 V1031.2 H1677.5 V1026.5 H1672.8 V1018.5 H1677.5Z" fill="#000" stroke="#000" stroke-width="1" stroke-linejoin="round"/><path d="M1676.5 1012.8 H1684.5 V1017.5 H1689.2 V1025.5 H1684.5 V1030.2 H1676.5 V1025.5 H1671.8 V1017.5 H1676.5Z" fill="#fff" stroke="#111" stroke-width="1" stroke-linejoin="round"/></svg>
<span class="t" style="top:19.00px;font-size:19.5px;line-height:19.5px;color:#f2f2f2;font-weight:700;left:110.58px;transform-origin:0 0;transform:scaleX(0.9194);">Windows 11 Pro</span>
<span class="t" style="top:69.00px;font-size:15.2px;line-height:15.2px;color:#2a2a2a;left:175.21px;transform-origin:0 0;transform:scaleX(1.0329);">Book</span>
<span class="t" style="top:69.00px;font-size:15.2px;line-height:15.2px;color:#2a2a2a;left:216.45px;transform-origin:0 0;transform:scaleX(0.9815);">2.xlsx</span>
<span class="t" style="top:69.00px;font-size:15.2px;line-height:15.2px;color:#2a2a2a;left:258.91px;transform-origin:0 0;transform:scaleX(1.3201);">-</span>
<span class="t" style="top:69.00px;font-size:15.2px;line-height:15.2px;color:#2a2a2a;left:270.01px;transform-origin:0 0;transform:scaleX(1.1170);">Microsoft</span>
<span class="t" style="top:69.00px;font-size:15.2px;line-height:15.2px;color:#2a2a2a;left:343.68px;transform-origin:0 0;transform:scaleX(0.9777);">Excel</span>
<span class="t" style="top:69.00px;font-size:15.2px;line-height:15.2px;color:#2a2a2a;left:384.43px;transform-origin:0 0;transform:scaleX(1.0752);">Onlin</span>
<span class="t" style="top:125.00px;font-size:18.6px;line-height:18.6px;color:#2b2b2b;left:151.66px;transform-origin:0 0;transform:scaleX(1.0100);">Book</span>
<span class="t" style="top:126.00px;font-size:18.2px;line-height:18.2px;color:#6b6b6b;left:676.33px;transform-origin:0 0;transform:scaleX(1.0523);">Search for tools, help, and more (Alt + Q)</span>
<span class="t" style="top:179.00px;font-size:18.6px;line-height:18.6px;color:#4a4a4a;left:33.68px;transform-origin:0 0;transform:scaleX(0.9958);">File</span>
<span class="t" style="top:179.00px;font-size:18.6px;line-height:18.6px;color:#4a4a4a;left:173.43px;transform-origin:0 0;transform:scaleX(1.0299);">Insert</span>
<span class="t" style="top:179.00px;font-size:18.6px;line-height:18.6px;color:#4a4a4a;left:253.48px;transform-origin:0 0;transform:scaleX(0.9697);">Share</span>
<span class="t" style="top:179.00px;font-size:18.6px;line-height:18.6px;color:#4a4a4a;left:332.28px;transform-origin:0 0;transform:scaleX(0.9936);">Page Layout</span>
<span class="t" style="top:179.00px;font-size:18.6px;line-height:18.6px;color:#4a4a4a;left:468.47px;transform-origin:0 0;transform:scaleX(1.0026);">Formulas</span>
<span class="t" style="top:179.00px;font-size:18.6px;line-height:18.6px;color:#4a4a4a;left:577.58px;transform-origin:0 0;transform:scaleX(0.9932);">Data</span>
<span class="t" style="top:179.00px;font-size:18.6px;line-height:18.6px;color:#4a4a4a;left:648.73px;transform-origin:0 0;transform:scaleX(0.9666);">Review</span>
<span class="t" style="top:179.00px;font-size:18.6px;line-height:18.6px;color:#4a4a4a;left:741.12px;transform-origin:0 0;transform:scaleX(0.9666);">View</span>
<span class="t" style="top:179.00px;font-size:18.6px;line-height:18.6px;color:#4a4a4a;left:811.18px;transform-origin:0 0;transform:scaleX(1.0600);">Help</span>
<span class="t" style="top:179.00px;font-size:18.6px;line-height:18.6px;color:#4a4a4a;left:882.87px;transform-origin:0 0;transform:scaleX(1.0021);">Draw</span>
<span class="t" style="top:179.00px;font-size:18.6px;line-height:18.6px;color:#242424;left:89.65px;transform-origin:0 0;transform:scaleX(1.0834);-webkit-text-stroke:0.55px #242424;">Home</span>
<span class="t" style="top:179.00px;font-size:16.2px;line-height:16.2px;color:#333;left:1569.57px;transform-origin:0 0;transform:scaleX(1.0071);">Comments</span>
<span class="t" style="top:179.00px;font-size:16.2px;line-height:16.2px;color:#333;left:1710.43px;transform-origin:0 0;transform:scaleX(1.0291);">Editing</span>
<span class="t" style="top:180.00px;font-size:16.4px;line-height:16.4px;color:#fff;font-weight:700;left:1846.28px;transform-origin:0 0;transform:scaleX(0.8893);">Share</span>
<span class="t" style="top:234.00px;font-size:18.6px;line-height:18.6px;color:#2b2b2b;left:216.25px;transform-origin:0 0;transform:scaleX(1.0088);">Calibri (Body)</span>
<span class="t" style="top:234.00px;font-size:18.6px;line-height:18.6px;color:#2b2b2b;left:395.78px;transform-origin:0 0;transform:scaleX(1.0035);">12</span>
<span class="t" style="top:231.00px;font-size:24.8px;line-height:24.8px;color:#2b2b2b;left:480.54px;transform-origin:0 0;transform:scaleX(0.8633);-webkit-text-stroke:0.7px #2b2b2b;">B</span>
<span class="t" style="top:229.00px;font-size:16.3px;line-height:16.3px;color:#3b3b3b;left:651.77px;transform-origin:0 0;transform:scaleX(0.9805);">A</span>
<span class="t" style="top:234.00px;font-size:18.6px;line-height:18.6px;color:#2b2b2b;left:948.27px;transform-origin:0 0;transform:scaleX(0.9941);">General</span>
<span class="t" style="top:230.00px;font-size:22.7px;line-height:22.7px;color:#444;left:1134.35px;transform-origin:0 0;transform:scaleX(0.5992);">$</span>
<span class="t" style="top:232.00px;font-size:21px;line-height:21px;color:#444;left:1143.96px;transform-origin:0 0;transform:scaleX(0.8641);">€</span>
<span class="t" style="top:231.00px;font-size:16.4px;line-height:16.4px;color:#3b3b3b;left:1194.46px;transform-origin:0 0;transform:scaleX(1.0924);">.0</span>
<span class="t" style="top:231.00px;font-size:16.4px;line-height:16.4px;color:#3b3b3b;left:1239.35px;transform-origin:0 0;transform:scaleX(1.0359);">.00</span>
<span class="t" style="top:231.00px;font-size:11.8px;line-height:11.8px;color:#4a9fd0;font-weight:700;left:1559.52px;transform-origin:0 0;transform:scaleX(0.9588);">A</span>
<span class="t" style="top:242.00px;font-size:11.7px;line-height:11.7px;color:#3a3a3a;font-weight:700;left:1560.37px;transform-origin:0 0;transform:scaleX(0.9605);">Z</span>
<span class="t" style="top:285.00px;font-size:16.8px;line-height:16.8px;color:#2b2b2b;left:23.57px;transform-origin:0 0;transform:scaleX(1.0468);">O30</span>
<span class="t" style="top:282.44px;font-size:15.9px;line-height:15.9px;color:#454545;left:281.60px;transform-origin:0 0;font-family:'Liberation Serif',serif;font-style:italic;">f</span>
<span class="t" style="top:287.00px;font-size:13.5px;line-height:13.5px;color:#454545;left:288.04px;transform-origin:0 0;transform:scaleX(1.0692);">x</span>
<span class="t" style="top:331.00px;font-size:15.2px;line-height:15.2px;color:#4a4a4a;left:74.10px;transform-origin:0 0;transform:translateX(-50%) scaleX(0.9700);transform-origin:50% 0;">A</span>
<span class="t" style="top:331.00px;font-size:15.2px;line-height:15.2px;color:#4a4a4a;left:157.30px;transform-origin:0 0;transform:translateX(-50%) scaleX(0.9700);transform-origin:50% 0;">B</span>
<span class="t" style="top:331.00px;font-size:15.2px;line-height:15.2px;color:#4a4a4a;left:292.50px;transform-origin:0 0;transform:translateX(-50%) scaleX(0.9700);transform-origin:50% 0;">C</span>
<span class="t" style="top:331.00px;font-size:15.2px;line-height:15.2px;color:#4a4a4a;left:427.75px;transform-origin:0 0;transform:translateX(-50%) scaleX(0.9700);transform-origin:50% 0;">D</span>
<span class="t" style="top:331.00px;font-size:15.2px;line-height:15.2px;color:#4a4a4a;left:563.25px;transform-origin:0 0;transform:translateX(-50%) scaleX(0.9700);transform-origin:50% 0;">E</span>
<span class="t" style="top:331.00px;font-size:15.2px;line-height:15.2px;color:#4a4a4a;left:698.65px;transform-origin:0 0;transform:translateX(-50%) scaleX(0.9700);transform-origin:50% 0;">F</span>
<span class="t" style="top:331.00px;font-size:15.2px;line-height:15.2px;color:#4a4a4a;left:834.00px;transform-origin:0 0;transform:translateX(-50%) scaleX(0.9700);transform-origin:50% 0;">G</span>
<span class="t" style="top:331.00px;font-size:15.2px;line-height:15.2px;color:#4a4a4a;left:969.40px;transform-origin:0 0;transform:translateX(-50%) scaleX(0.9700);transform-origin:50% 0;">H</span>
<span class="t" style="top:331.00px;font-size:15.2px;line-height:15.2px;color:#4a4a4a;left:1104.90px;transform-origin:0 0;transform:translateX(-50%) scaleX(0.9700);transform-origin:50% 0;">I</span>
<span class="t" style="top:331.00px;font-size:15.2px;line-height:15.2px;color:#4a4a4a;left:1240.40px;transform-origin:0 0;transform:translateX(-50%) scaleX(0.9700);transform-origin:50% 0;">J</span>
<span class="t" style="top:331.00px;font-size:15.2px;line-height:15.2px;color:#4a4a4a;left:1375.95px;transform-origin:0 0;transform:translateX(-50%) scaleX(0.9700);transform-origin:50% 0;">K</span>
<span class="t" style="top:331.00px;font-size:15.2px;line-height:15.2px;color:#4a4a4a;left:1459.35px;transform-origin:0 0;transform:translateX(-50%) scaleX(0.9700);transform-origin:50% 0;">L</span>
<span class="t" style="top:331.00px;font-size:15.2px;line-height:15.2px;color:#4a4a4a;left:1513.20px;transform-origin:0 0;transform:translateX(-50%) scaleX(0.9700);transform-origin:50% 0;">M</span>
<span class="t" style="top:331.00px;font-size:15.2px;line-height:15.2px;color:#4a4a4a;left:1589.00px;transform-origin:0 0;transform:translateX(-50%) scaleX(0.9700);transform-origin:50% 0;">N</span>
<span class="t" style="top:331.00px;font-size:15.2px;line-height:15.2px;color:#1f5c3a;left:1665.70px;transform-origin:0 0;transform:translateX(-50%) scaleX(0.9700);transform-origin:50% 0;">O</span>
<span class="t" style="top:331.00px;font-size:15.2px;line-height:15.2px;color:#4a4a4a;left:1742.70px;transform-origin:0 0;transform:translateX(-50%) scaleX(0.9700);transform-origin:50% 0;">P</span>
<span class="t" style="top:331.00px;font-size:15.2px;line-height:15.2px;color:#4a4a4a;left:1818.80px;transform-origin:0 0;transform:translateX(-50%) scaleX(0.9700);transform-origin:50% 0;">Q</span>
<span class="t" style="top:331.00px;font-size:15.2px;line-height:15.2px;color:#4a4a4a;left:1894.50px;transform-origin:0 0;transform:translateX(-50%) scaleX(0.9700);transform-origin:50% 0;">R</span>
<span class="t" style="top:360.00px;font-size:15px;line-height:15px;color:#636363;right:1885.32px;transform-origin:100% 0;transform:scaleX(1.0600);">1</span>
<span class="t" style="top:432.00px;font-size:15px;line-height:15px;color:#636363;right:1885.30px;transform-origin:100% 0;transform:scaleX(1.0600);">2</span>
<span class="t" style="top:507.00px;font-size:15px;line-height:15px;color:#636363;right:1885.40px;transform-origin:100% 0;transform:scaleX(1.0600);">3</span>
<span class="t" style="top:558.00px;font-size:15px;line-height:15px;color:#636363;right:1885.63px;transform-origin:100% 0;transform:scaleX(1.0600);">4</span>
<span class="t" style="top:609.00px;font-size:15px;line-height:15px;color:#636363;right:1885.43px;transform-origin:100% 0;transform:scaleX(1.0600);">5</span>
<span class="t" style="top:648.00px;font-size:15px;line-height:15px;color:#636363;right:1885.40px;transform-origin:100% 0;transform:scaleX(1.0600);">6</span>
<span class="t" style="top:687.00px;font-size:15px;line-height:15px;color:#636363;right:1885.30px;transform-origin:100% 0;transform:scaleX(1.0600);">7</span>
<span class="t" style="top:727.00px;font-size:15px;line-height:15px;color:#636363;right:1885.41px;transform-origin:100% 0;transform:scaleX(1.0600);">8</span>
<span class="t" style="top:766.00px;font-size:15px;line-height:15px;color:#636363;right:1885.35px;transform-origin:100% 0;transform:scaleX(1.0600);">9</span>
<span class="t" style="top:795.00px;font-size:15px;line-height:15px;color:#636363;right:1885.48px;transform-origin:100% 0;transform:scaleX(1.0600);">10</span>
<span class="t" style="top:822.00px;font-size:15px;line-height:15px;color:#636363;right:1885.32px;transform-origin:100% 0;transform:scaleX(1.0600);">11</span>
<span class="t" style="top:864.00px;font-size:15px;line-height:15px;color:#636363;right:1885.30px;transform-origin:100% 0;transform:scaleX(1.0600);">12</span>
<span class="t" style="top:929.00px;font-size:15px;line-height:15px;color:#636363;right:1885.40px;transform-origin:100% 0;transform:scaleX(1.0600);">13</span>
<span class="t" style="top:989.00px;font-size:15px;line-height:15px;color:#636363;right:1885.63px;transform-origin:100% 0;transform:scaleX(1.0600);">14</span>
<span class="t" style="top:1028.00px;font-size:15px;line-height:15px;color:#636363;right:1885.43px;transform-origin:100% 0;transform:scaleX(1.0600);">15</span>
<span class="t" style="top:1068.00px;font-size:15px;line-height:15px;color:#636363;right:1885.40px;transform-origin:100% 0;transform:scaleX(1.0600);">16</span>
<span class="t" style="top:413.00px;font-size:60.4px;line-height:60.4px;color:#3a6e3b;font-weight:700;left:234.21px;transform-origin:0 0;transform:scaleX(0.8880);">Loan</span>
<span class="t" style="top:413.00px;font-size:60.4px;line-height:60.4px;color:#3a6e3b;font-weight:700;left:375.83px;transform-origin:0 0;transform:scaleX(0.9463);">amortization</span>
<span class="t" style="top:413.00px;font-size:60.4px;line-height:60.4px;color:#3a6e3b;font-weight:700;left:729.06px;transform-origin:0 0;transform:scaleX(0.9122);">schedule</span>
<span class="t" style="top:552.00px;font-size:28.8px;line-height:28.8px;color:#3a6e3b;font-weight:700;left:104.35px;transform-origin:0 0;transform:scaleX(0.9622);">Enter values</span>
<span class="t" style="top:552.00px;font-size:28.8px;line-height:28.8px;color:#3a6e3b;font-weight:700;left:781.14px;transform-origin:0 0;transform:scaleX(0.9637);">Loan summary</span>
<span class="t" style="top:609.00px;font-size:17px;line-height:17px;color:#262626;left:102.11px;transform-origin:0 0;transform:scaleX(1.0693);">Loan amount</span>
<span class="t" style="top:609.00px;font-size:17px;line-height:17px;color:#5c5c5c;right:1321.09px;transform-origin:100% 0;transform:scaleX(1.0656);">$5,000.00</span>
<span class="t" style="top:647.00px;font-size:17px;line-height:17px;color:#262626;left:102.96px;transform-origin:0 0;transform:scaleX(1.0762);">Annual interest rate</span>
<span class="t" style="top:647.00px;font-size:17px;line-height:17px;color:#5c5c5c;right:1321.17px;transform-origin:100% 0;transform:scaleX(1.0380);">4.00%</span>
<span class="t" style="top:687.00px;font-size:17px;line-height:17px;color:#262626;left:102.13px;transform-origin:0 0;transform:scaleX(1.0537);">Loan period in years</span>
<span class="t" style="top:687.00px;font-size:17px;line-height:17px;color:#5c5c5c;right:1320.81px;transform-origin:100% 0;transform:scaleX(1.1983);">1</span>
<span class="t" style="top:726.00px;font-size:17px;line-height:17px;color:#262626;left:102.11px;transform-origin:0 0;transform:scaleX(1.0716);">Number of payments per year</span>
<span class="t" style="top:726.00px;font-size:17px;line-height:17px;color:#5c5c5c;right:1320.83px;transform-origin:100% 0;transform:scaleX(1.1328);">12</span>
<span class="t" style="top:766.00px;font-size:17px;line-height:17px;color:#262626;left:102.77px;transform-origin:0 0;transform:scaleX(1.0752);">Start date of loan</span>
<span class="t" style="top:766.00px;font-size:17px;line-height:17px;color:#5c5c5c;right:1320.98px;transform-origin:100% 0;transform:scaleX(1.1423);">6/18/2025</span>
<span class="t" style="top:609.00px;font-size:17px;line-height:17px;color:#262626;left:779.39px;transform-origin:0 0;transform:scaleX(1.0550);">Scheduled payment</span>
<span class="t" style="top:609.00px;font-size:17px;line-height:17px;color:#4f4f4f;right:508.44px;transform-origin:100% 0;transform:scaleX(1.0635);">$425.75</span>
<span class="t" style="top:647.00px;font-size:17px;line-height:17px;color:#262626;left:779.38px;transform-origin:0 0;transform:scaleX(1.0651);">Scheduled number of payments</span>
<span class="t" style="top:647.00px;font-size:17px;line-height:17px;color:#4f4f4f;right:508.22px;transform-origin:100% 0;transform:scaleX(1.1448);">12</span>
<span class="t" style="top:687.00px;font-size:17px;line-height:17px;color:#262626;left:779.56px;transform-origin:0 0;transform:scaleX(1.0770);">Actual number of payments</span>
<span class="t" style="top:687.00px;font-size:17px;line-height:17px;color:#4f4f4f;right:508.45px;transform-origin:100% 0;transform:scaleX(1.1319);">10</span>
<span class="t" style="top:726.00px;font-size:17px;line-height:17px;color:#262626;left:779.79px;transform-origin:0 0;transform:scaleX(1.0651);">Total early payments</span>
<span class="t" style="top:726.00px;font-size:17px;line-height:17px;color:#4f4f4f;right:508.49px;transform-origin:100% 0;transform:scaleX(1.0626);">$900.00</span>
<span class="t" style="top:766.00px;font-size:17px;line-height:17px;color:#262626;left:779.79px;transform-origin:0 0;transform:scaleX(1.0846);">Total interest</span>
<span class="t" style="top:766.00px;font-size:17px;line-height:17px;color:#4f4f4f;right:508.29px;transform-origin:100% 0;transform:scaleX(1.0675);">$89.62</span>
<span class="t" style="top:818.00px;font-size:19.4px;line-height:19.4px;color:#3a6e3b;font-weight:700;left:103.39px;transform-origin:0 0;transform:scaleX(1.0191);">Optional extra payments</span>
<span class="t" style="top:822.00px;font-size:17px;line-height:17px;color:#262626;right:1321.09px;transform-origin:100% 0;transform:scaleX(1.0659);">$100.00</span>
<span class="t" style="top:817.00px;font-size:19.4px;line-height:19.4px;color:#3a6e3b;font-weight:700;left:781.08px;transform-origin:0 0;transform:scaleX(1.0190);">Lender name</span>
<span class="t" style="top:822.00px;font-size:17px;line-height:17px;color:#262626;right:509.23px;transform-origin:100% 0;transform:scaleX(1.0426);">Woodgrove Bank</span>
<span class="t" style="top:913.00px;font-size:19.8px;line-height:19.8px;color:#555555;font-weight:700;left:157.20px;transform-origin:0 0;transform:translateX(-50%) scaleX(0.9938);transform-origin:50% 0;">Payment</span>
<span class="t" style="top:942.00px;font-size:19.8px;line-height:19.8px;color:#555555;font-weight:700;left:157.20px;transform-origin:0 0;transform:translateX(-50%) scaleX(1.0290);transform-origin:50% 0;">number</span>
<span class="t" style="top:913.00px;font-size:19.8px;line-height:19.8px;color:#555555;font-weight:700;left:292.40px;transform-origin:0 0;transform:translateX(-50%) scaleX(0.9938);transform-origin:50% 0;">Payment</span>
<span class="t" style="top:942.00px;font-size:19.8px;line-height:19.8px;color:#555555;font-weight:700;left:292.40px;transform-origin:0 0;transform:translateX(-50%) scaleX(1.0460);transform-origin:50% 0;">date</span>
<span class="t" style="top:913.00px;font-size:19.8px;line-height:19.8px;color:#555555;font-weight:700;left:427.65px;transform-origin:0 0;transform:translateX(-50%) scaleX(0.9739);transform-origin:50% 0;">Beginning</span>
<span class="t" style="top:942.00px;font-size:19.8px;line-height:19.8px;color:#555555;font-weight:700;left:427.65px;transform-origin:0 0;transform:translateX(-50%) scaleX(1.0043);transform-origin:50% 0;">balance</span>
<span class="t" style="top:913.00px;font-size:19.8px;line-height:19.8px;color:#555555;font-weight:700;left:563.15px;transform-origin:0 0;transform:translateX(-50%) scaleX(0.9842);transform-origin:50% 0;">Scheduled</span>
<span class="t" style="top:942.00px;font-size:19.8px;line-height:19.8px;color:#555555;font-weight:700;left:563.15px;transform-origin:0 0;transform:translateX(-50%) scaleX(1.0224);transform-origin:50% 0;">payment</span>
<span class="t" style="top:913.00px;font-size:19.8px;line-height:19.8px;color:#555555;font-weight:700;left:698.55px;transform-origin:0 0;transform:translateX(-50%) scaleX(0.9527);transform-origin:50% 0;">Extra</span>
<span class="t" style="top:942.00px;font-size:19.8px;line-height:19.8px;color:#555555;font-weight:700;left:698.55px;transform-origin:0 0;transform:translateX(-50%) scaleX(1.0224);transform-origin:50% 0;">payment</span>
<span class="t" style="top:913.00px;font-size:19.8px;line-height:19.8px;color:#555555;font-weight:700;left:833.90px;transform-origin:0 0;transform:translateX(-50%) scaleX(1.0323);transform-origin:50% 0;">Total</span>
<span class="t" style="top:942.00px;font-size:19.8px;line-height:19.8px;color:#555555;font-weight:700;left:833.90px;transform-origin:0 0;transform:translateX(-50%) scaleX(1.0224);transform-origin:50% 0;">payment</span>
<span class="t" style="top:928.00px;font-size:19.8px;line-height:19.8px;color:#555555;font-weight:700;left:969.30px;transform-origin:0 0;transform:translateX(-50%) scaleX(0.9872);transform-origin:50% 0;">Principal</span>
<span class="t" style="top:928.00px;font-size:19.8px;line-height:19.8px;color:#555555;font-weight:700;left:1104.80px;transform-origin:0 0;transform:translateX(-50%) scaleX(1.0186);transform-origin:50% 0;">Interest</span>
<span class="t" style="top:913.00px;font-size:19.8px;line-height:19.8px;color:#555555;font-weight:700;left:1240.30px;transform-origin:0 0;transform:translateX(-50%) scaleX(0.9847);transform-origin:50% 0;">Ending</span>
<span class="t" style="top:942.00px;font-size:19.8px;line-height:19.8px;color:#555555;font-weight:700;left:1240.30px;transform-origin:0 0;transform:translateX(-50%) scaleX(1.0043);transform-origin:50% 0;">balance</span>
<span class="t" style="top:913.00px;font-size:19.8px;line-height:19.8px;color:#555555;font-weight:700;left:1375.85px;transform-origin:0 0;transform:translateX(-50%) scaleX(0.9987);transform-origin:50% 0;">Cumulative</span>
<span class="t" style="top:942.00px;font-size:19.8px;line-height:19.8px;color:#555555;font-weight:700;left:1375.85px;transform-origin:0 0;transform:translateX(-50%) scaleX(1.0108);transform-origin:50% 0;">interest</span>
<span class="t" style="top:989.00px;font-size:17px;line-height:17px;color:#262626;left:157.40px;transform-origin:0 0;transform:translateX(-50%) scaleX(1.0077);transform-origin:50% 0;">1</span>
<span class="t" style="top:989.00px;font-size:17px;line-height:17px;color:#262626;left:292.40px;transform-origin:0 0;transform:translateX(-50%) scaleX(1.1315);transform-origin:50% 0;">6/18/2025</span>
<span class="t" style="top:989.00px;font-size:17px;line-height:17px;color:#262626;right:1467.71px;transform-origin:100% 0;transform:scaleX(1.0350);">$5,000.00</span>
<span class="t" style="top:989.00px;font-size:17px;line-height:17px;color:#262626;right:1332.16px;transform-origin:100% 0;transform:scaleX(1.0351);">$425.75</span>
<span class="t" style="top:989.00px;font-size:17px;line-height:17px;color:#262626;right:1196.91px;transform-origin:100% 0;transform:scaleX(1.0342);">$100.00</span>
<span class="t" style="top:989.00px;font-size:17px;line-height:17px;color:#262626;right:1061.46px;transform-origin:100% 0;transform:scaleX(1.0351);">$525.75</span>
<span class="t" style="top:989.00px;font-size:17px;line-height:17px;color:#262626;right:926.04px;transform-origin:100% 0;transform:scaleX(1.0355);">$509.08</span>
<span class="t" style="top:989.00px;font-size:17px;line-height:17px;color:#262626;right:790.31px;transform-origin:100% 0;transform:scaleX(1.0370);">$16.67</span>
<span class="t" style="top:989.00px;font-size:17px;line-height:17px;color:#262626;right:654.91px;transform-origin:100% 0;transform:scaleX(1.0376);">$4,490.92</span>
<span class="t" style="top:989.00px;font-size:17px;line-height:17px;color:#262626;right:519.21px;transform-origin:100% 0;transform:scaleX(1.0370);">$16.67</span>
<span class="t" style="top:1028.00px;font-size:17px;line-height:17px;color:#262626;left:157.40px;transform-origin:0 0;transform:translateX(-50%) scaleX(0.9538);transform-origin:50% 0;">2</span>
<span class="t" style="top:1028.00px;font-size:17px;line-height:17px;color:#262626;left:292.40px;transform-origin:0 0;transform:translateX(-50%) scaleX(1.1316);transform-origin:50% 0;">7/18/2025</span>
<span class="t" style="top:1028.00px;font-size:17px;line-height:17px;color:#262626;right:1467.51px;transform-origin:100% 0;transform:scaleX(1.0376);">$4,490.92</span>
<span class="t" style="top:1028.00px;font-size:17px;line-height:17px;color:#262626;right:1332.16px;transform-origin:100% 0;transform:scaleX(1.0351);">$425.75</span>
<span class="t" style="top:1028.00px;font-size:17px;line-height:17px;color:#262626;right:1196.91px;transform-origin:100% 0;transform:scaleX(1.0342);">$100.00</span>
<span class="t" style="top:1028.00px;font-size:17px;line-height:17px;color:#262626;right:1061.46px;transform-origin:100% 0;transform:scaleX(1.0351);">$525.75</span>
<span class="t" style="top:1028.00px;font-size:17px;line-height:17px;color:#262626;right:926.04px;transform-origin:100% 0;transform:scaleX(1.0355);">$510.78</span>
<span class="t" style="top:1028.00px;font-size:17px;line-height:17px;color:#262626;right:790.31px;transform-origin:100% 0;transform:scaleX(1.0370);">$14.97</span>
<span class="t" style="top:1028.00px;font-size:17px;line-height:17px;color:#262626;right:655.29px;transform-origin:100% 0;transform:scaleX(1.0327);">$3,980.14</span>
<span class="t" style="top:1028.00px;font-size:17px;line-height:17px;color:#262626;right:519.59px;transform-origin:100% 0;transform:scaleX(1.0298);">$31.64</span>
<span class="t" style="top:1067.00px;font-size:17px;line-height:17px;color:#262626;left:157.40px;transform-origin:0 0;transform:translateX(-50%) scaleX(0.9165);transform-origin:50% 0;">3</span>
<span class="t" style="top:1067.00px;font-size:17px;line-height:17px;color:#262626;left:292.40px;transform-origin:0 0;transform:translateX(-50%) scaleX(1.1296);transform-origin:50% 0;">8/18/2025</span>
<span class="t" style="top:1067.00px;font-size:17px;line-height:17px;color:#262626;right:1467.89px;transform-origin:100% 0;transform:scaleX(1.0327);">$3,980.14</span>
<span class="t" style="top:1067.00px;font-size:17px;line-height:17px;color:#262626;right:1332.16px;transform-origin:100% 0;transform:scaleX(1.0351);">$425.75</span>
<span class="t" style="top:1067.00px;font-size:17px;line-height:17px;color:#262626;right:1196.91px;transform-origin:100% 0;transform:scaleX(1.0342);">$100.00</span>
<span class="t" style="top:1067.00px;font-size:17px;line-height:17px;color:#262626;right:1061.46px;transform-origin:100% 0;transform:scaleX(1.0351);">$525.75</span>
<span class="t" style="top:1067.00px;font-size:17px;line-height:17px;color:#262626;right:926.04px;transform-origin:100% 0;transform:scaleX(1.0355);">$512.48</span>
<span class="t" style="top:1067.00px;font-size:17px;line-height:17px;color:#262626;right:790.31px;transform-origin:100% 0;transform:scaleX(1.0370);">$13.27</span>
<span class="t" style="top:1067.00px;font-size:17px;line-height:17px;color:#262626;right:655.06px;transform-origin:100% 0;transform:scaleX(1.0357);">$3,467.65</span>
<span class="t" style="top:1067.00px;font-size:17px;line-height:17px;color:#262626;right:519.41px;transform-origin:100% 0;transform:scaleX(1.0332);">$44.90</span>
<div style="left:398px;top:60px;width:27px;height:32px;background:linear-gradient(90deg,rgba(247,247,247,0),#f7f7f7 78%);"></div>
<svg style="left:1207.3px;top:242.3px;" width="12" height="12" viewBox="0 0 12 12"><circle cx="6" cy="6" r="6.3" fill="#2487c6" stroke="#fff" stroke-width="1"/><path d="M9 6 H3.4 M5.6 3.6 L3.2 6 L5.6 8.4" fill="none" stroke="#fff" stroke-width="1.3" stroke-linecap="round" stroke-linejoin="round"/></svg>
<svg style="left:1251px;top:242.3px;" width="12" height="12" viewBox="0 0 12 12"><circle cx="6" cy="6" r="6.3" fill="#2487c6" stroke="#fff" stroke-width="1"/><path d="M3 6 H8.6 M6.4 3.6 L8.8 6 L6.4 8.4" fill="none" stroke="#fff" stroke-width="1.3" stroke-linecap="round" stroke-linejoin="round"/></svg>
</div></body></html>
